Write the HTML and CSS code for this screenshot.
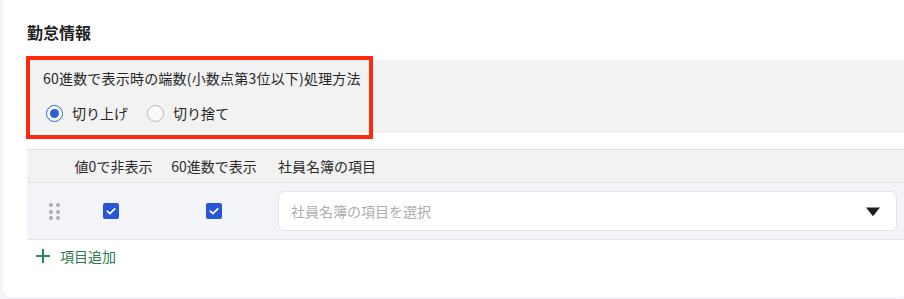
FILE: index.html
```html
<!DOCTYPE html>
<html lang="ja">
<head>
<meta charset="utf-8">
<link rel="stylesheet" href="styles.css">
</head>
<body>
<div class="card">
  <h2 class="title">勤怠情報</h2>
  <div class="panel">
    <div class="panel-label">60進数で表示時の端数(小数点第3位以下)処理方法</div>
    <div class="radios">
      <label class="radio"><span class="radio-dot on"></span><span>切り上げ</span></label>
      <label class="radio"><span class="radio-dot"></span><span>切り捨て</span></label>
    </div>
  </div>
  <div class="annot"></div>
  <div class="table">
    <div class="thead">
      <div class="cell"></div>
      <div class="cell center">値0で非表示</div>
      <div class="cell center">60進数で表示</div>
      <div class="cell col3">社員名簿の項目</div>
    </div>
    <div class="trow">
      <div class="cell center">
        <span class="handle"><i></i><i></i><i></i><i></i><i></i><i></i></span>
      </div>
      <div class="cell center"><span class="check first"><svg viewBox="0 0 16 16" width="16" height="16"><path d="M4.3 8.2 L6.9 10.6 L11.7 5.8" fill="none" stroke="#fff" stroke-width="1.7" stroke-linecap="round" stroke-linejoin="round"/></svg></span></div>
      <div class="cell center"><span class="check"><svg viewBox="0 0 16 16" width="16" height="16"><path d="M4.3 8.2 L6.9 10.6 L11.7 5.8" fill="none" stroke="#fff" stroke-width="1.7" stroke-linecap="round" stroke-linejoin="round"/></svg></span></div>
      <div class="cell col3">
        <div class="select">
          <span class="placeholder">社員名簿の項目を選択</span>
          <svg class="caret" viewBox="0 0 14 9" width="14" height="9"><path d="M0 0.5 H14 L7.6 8.6 Q7 9.2 6.4 8.6 Z" fill="#1f1f1f"/></svg>
        </div>
      </div>
    </div>
  </div>
  <div class="add">
    <svg class="plus" viewBox="0 0 16 16" width="16" height="16"><path d="M8 1 V15 M1 8 H15" stroke="#2b8a5b" stroke-width="2" fill="none"/></svg>
    <span>項目追加</span>
  </div>
</div>
</body>
</html>
```

FILE: styles.css
```css
html, body {
  margin: 0;
  padding: 0;
}
body {
  background: #f4f5f8;
  width: 904px;
  height: 299px;
  overflow: hidden;
  font-family: "Noto Sans CJK JP", "Noto Sans", sans-serif;
  color: #262626;
}
.card {
  position: relative;
  margin-left: 3px;
  width: 880px;
  padding: 20px 0 25px 24px;
  background: #fff;
  border-radius: 0 0 8px 8px;
}
.title {
  margin: 0;
  font-size: 16px;
  line-height: 24px;
  font-weight: 700;
  color: #222;
}
.panel {
  margin-top: 16px;
  background: #f2f2f2;
  height: 73px;
  box-sizing: border-box;
  padding: 8px 16px 0 16px;
}
.panel-label {
  font-size: 14px;
  line-height: 20px;
  letter-spacing: 0.2px;
  color: #262626;
}
.radios {
  display: flex;
  gap: 19px;
  margin-top: 13px;
  padding-left: 3px;
  height: 24px;
  align-items: center;
}
.radio {
  display: flex;
  align-items: center;
  gap: 9px;
  font-size: 14px;
  line-height: 20px;
}
.radio-dot {
  width: 17px;
  height: 17px;
  box-sizing: border-box;
  border-radius: 50%;
  border: 1.5px solid #b5b5b5;
  background: #fafafa;
  display: flex;
  align-items: center;
  justify-content: center;
}
.radio-dot.on {
  border: 1.8px solid #2563d9;
  background: #fff;
}
.radio-dot.on::after {
  content: "";
  width: 9px;
  height: 9px;
  border-radius: 50%;
  background: #2563d9;
}
.annot {
  position: absolute;
  left: 23px;
  top: 56px;
  width: 347px;
  height: 83px;
  box-sizing: border-box;
  border: 4px solid #ff2a0e;
  pointer-events: none;
}
.table {
  margin-top: 16px;
}
.thead, .trow {
  display: grid;
  grid-template-columns: 40px 93px 108px 1fr;
  align-items: center;
}
.thead {
  height: 34px;
  box-sizing: border-box;
  background: #f2f2f2;
  border-top: 1px solid #e3e3e3;
  border-bottom: 1px solid #e2e4e9;
  font-size: 14px;
  color: #2b2b2b;
}
.trow {
  height: 57px;
  box-sizing: border-box;
  background: #f3f4f8;
  border-bottom: 1px solid #e1e3e7;
}
.cell {
  display: flex;
  align-items: center;
}
.center {
  justify-content: center;
}
.col3 {
  padding: 0 10px 0 10px;
}
.handle {
  display: grid;
  grid-template-columns: 4px 4px;
  column-gap: 3px;
  row-gap: 2.5px;
  margin-left: 14px;
  margin-top: 1px;
}
.handle i {
  width: 4px;
  height: 4px;
  border-radius: 50%;
  background: #adadad;
}
.check {
  width: 16px;
  height: 16px;
  border-radius: 2px;
  background: #2857d6;
  display: flex;
}
.check.first {
  margin-right: 5px;
}
.select {
  flex: 1;
  height: 40px;
  box-sizing: border-box;
  background: #fff;
  border: 1px solid #e2e3e7;
  border-radius: 6px;
  display: flex;
  align-items: center;
  justify-content: space-between;
  padding: 0 16px 0 12px;
}
.placeholder {
  font-size: 14px;
  color: #acacac;
}
.caret {
  display: block;
}
.add {
  display: flex;
  align-items: center;
  height: 32px;
  padding-left: 8px;
  gap: 9px;
  font-size: 14px;
  color: #2a7b52;
}
.plus {
  display: block;
}
```
